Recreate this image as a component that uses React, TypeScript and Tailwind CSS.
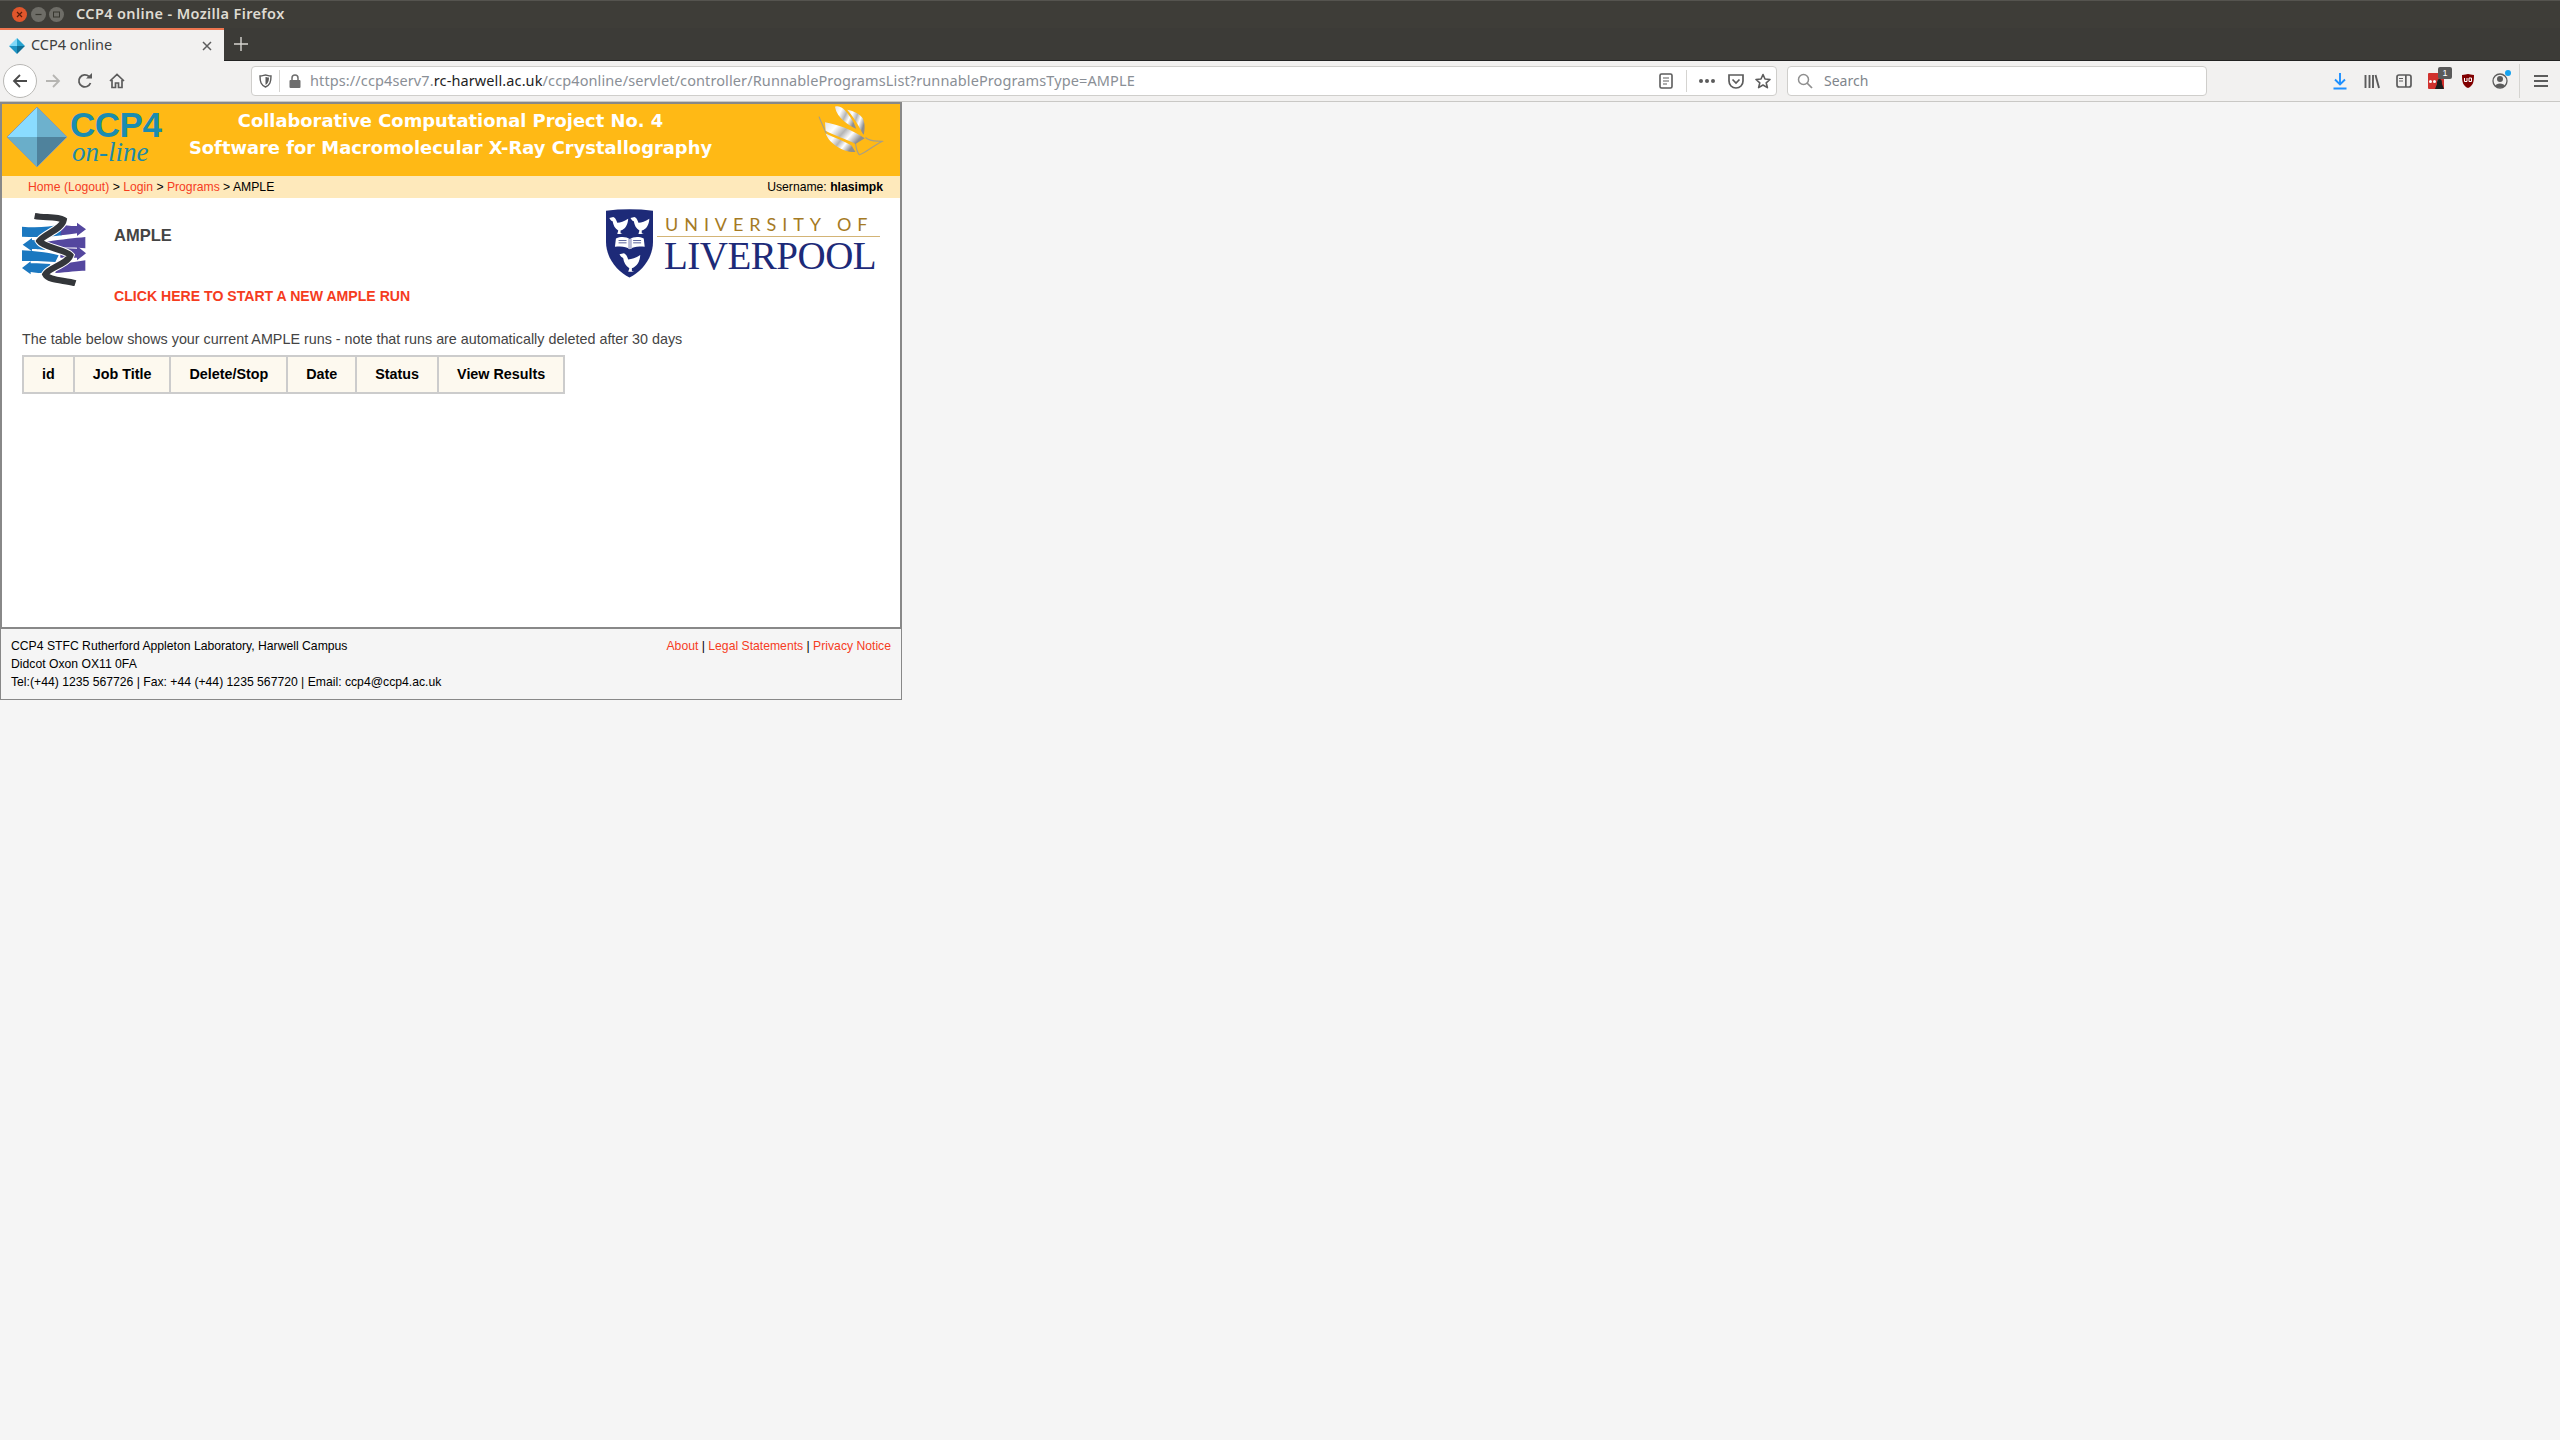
import React from "react";

function Diamond({ size }: { size: number }) {
  return (
    <svg width={size} height={size} viewBox="0 0 60 60" className="shrink-0">
      <polygon points="30,0 30,30 0,30" fill="#8adcff" />
      <polygon points="30,0 60,30 30,30" fill="#6db1cd" />
      <polygon points="0,30 30,30 30,60" fill="#6aaec9" />
      <polygon points="30,30 60,30 30,60" fill="#4f829c" />
      <polygon points="30,0 60,30 30,60 0,30" fill="none" stroke="#8f9ea3" strokeWidth="1" />
    </svg>
  );
}

function AmpleLogo() {
  const helix = "M58 30 C90 36 125 30 145 42 C140 70 85 85 72 105 C85 125 150 130 165 148 C155 175 100 185 90 205 C100 225 150 222 180 232";
  return (
    <svg width="65" height="75" viewBox="20 15 195 225" className="shrink-0">
      <g fill="#1b78c0">
        <path d="M20 62 C60 66 100 64 140 54 L140 88 C100 94 60 94 20 92 Z" />
        <path d="M22 116 L50 96 L50 102 C60 103 80 105 90 107 L90 132 C70 130 60 129 50 129 L50 136 Z" />
        <path d="M20 133 C50 135 90 137 130 148 L120 168 C80 165 50 165 20 165 Z" />
        <path d="M20 186 L46 166 L46 172 C60 171 85 174 105 174 L100 203 C75 202 60 200 46 198 L46 205 Z" />
      </g>
      <g fill="#54479f">
        <path d="M140 56 C165 60 175 60 185 60 L185 50 L212 70 L185 90 L185 82 C170 84 160 86 135 88 Z" />
        <path d="M95 107 C140 100 180 96 210 93 L210 127 C180 124 150 124 100 128 Z" />
        <path d="M135 126 L185 128 L185 120 L212 142 L185 163 L185 155 L135 155 Z" />
        <path d="M125 176 C160 170 185 168 210 163 L210 194 C185 194 160 198 120 201 Z" />
      </g>
      <path d={helix} fill="none" stroke="#ffffff" strokeWidth="25" />
      <path d={helix} fill="none" stroke="#33363a" strokeWidth="19" />
    </svg>
  );
}

const birdPath = "M28 38 L40 35 C48 38 50 48 52 52 C62 52 72 48 85 40 C84 58 76 72 62 76 L62 84 L68 86 L52 86 L55 76 C45 70 40 60 38 48 C35 46 32 46 28 38 Z";

function UniLogo() {
  return (
    <div className="flex items-start shrink-0">
      <svg width="47" height="69" viewBox="18 12 142 206" className="shrink-0">
        <path d="M18 16 C65 10 113 10 160 16 L160 110 C160 160 125 200 89 218 C53 200 18 160 18 110 Z" fill="#1d2a78" />
        <path d={birdPath} fill="#ffffff" />
        <path d={birdPath} fill="#ffffff" transform="translate(64 0)" />
        <path d="M48 100 C65 92 80 95 90 102 C100 95 115 92 132 100 L135 125 C115 122 100 125 90 132 C80 125 65 122 45 125 Z" fill="#ffffff" />
        <rect x="85" y="101" width="11" height="30" fill="#b5b8d5" />
        <path d="M56 106 H80 M56 113 H80 M100 106 H124 M100 113 H124" stroke="#3c4588" strokeWidth="2.5" />
        <path d={birdPath} fill="#ffffff" transform="translate(28 106) scale(1.1)" />
      </svg>
      <div className="flex flex-col ml-[4px] w-[223px]">
        <div className="h-[27px] pl-[8px] pt-[3px] font-['Lato',sans-serif] text-[18px] leading-[24px] tracking-[5.95px] text-[#a57a24] whitespace-nowrap">
          UNIVERSITY OF
        </div>
        <div className="h-[1px] bg-[#d3b476]" />
        <div className="pl-[7px] font-['Liberation_Serif',serif] text-[39px] leading-[38px] tracking-[-0.5px] text-[#1d2a78] whitespace-nowrap">
          LIVERPOOL
        </div>
      </div>
    </div>
  );
}

function Protein() {
  return (
    <svg width="67" height="53" viewBox="25 10 200 160" className="shrink-0">
      <defs>
        <linearGradient id="pg" x1="0" x2="1" y1="0" y2="0.5">
          <stop offset="0" stopColor="#e2e2e2" />
          <stop offset="0.3" stopColor="#ffffff" />
          <stop offset="0.55" stopColor="#b5b5b5" />
          <stop offset="0.75" stopColor="#ffffff" />
          <stop offset="1" stopColor="#8f8f8f" />
        </linearGradient>
      </defs>
      <path d="M30 45 C36 62 42 72 52 96 M140 125 C142 140 146 155 152 160 C170 155 190 135 220 120 C205 118 185 122 170 108" fill="none" stroke="#a89f86" strokeWidth="3.5" />
      <path d="M78 15 C95 10 108 25 118 38 C128 52 136 62 142 82 C122 72 84 50 78 15 Z" fill="url(#pg)" />
      <path d="M115 24 C135 28 155 38 162 50 C170 68 168 85 165 100 C155 88 148 62 115 24 Z" fill="url(#pg)" />
      <path d="M48 62 C85 68 130 85 168 110 L140 128 C110 112 70 100 50 88 Z" fill="url(#pg)" />
      <path d="M50 96 C75 108 105 118 128 132 L140 152 C110 155 62 130 50 96 Z" fill="url(#pg)" />
    </svg>
  );
}

const ic = "#5c5c5c";

function Favicon() {
  return (
    <svg width="16" height="16" viewBox="0 0 16 16">
      <polygon points="8,0 8,8 0,8" fill="#7fd8f8" />
      <polygon points="8,0 16,8 8,8" fill="#27a3d0" />
      <polygon points="0,8 8,8 8,16" fill="#1e94c4" />
      <polygon points="8,8 16,8 8,16" fill="#0f6f96" />
    </svg>
  );
}

function WinBtn({ bg, children }: { bg: string; children?: React.ReactNode }) {
  return (
    <div className={`w-[15px] h-[15px] rounded-full flex items-center justify-center ${bg}`}>{children}</div>
  );
}

function ToolBtn({ w = "w-[32px]", children }: { w?: string; children: React.ReactNode }) {
  return <div className={`${w} h-full flex items-center justify-center shrink-0`}>{children}</div>;
}

function Chrome() {
  return (
    <div className="font-['Noto_Sans','Open_Sans',sans-serif]">
      <div className="h-[28px] bg-[#3e3d38] border-t border-[#55544f] flex items-center">
        <div className="flex items-center gap-[3.5px] pl-[12px] w-[76px]">
          <WinBtn bg="bg-[#e0562c]">
            <svg width="7" height="7" viewBox="0 0 7 7"><path d="M1 1 L6 6 M6 1 L1 6" stroke="#5a1d0a" strokeWidth="1.2" /></svg>
          </WinBtn>
          <WinBtn bg="bg-[#6e6d67]">
            <svg width="7" height="7" viewBox="0 0 7 7"><path d="M0.5 3.5 H6.5" stroke="#37362f" strokeWidth="1.2" /></svg>
          </WinBtn>
          <WinBtn bg="bg-[#6e6d67]">
            <svg width="7" height="7" viewBox="0 0 7 7"><rect x="0.5" y="1" width="6" height="5" fill="none" stroke="#37362f" /></svg>
          </WinBtn>
        </div>
        <span className="pb-[1px] text-[14.5px] tracking-[0.37px] font-semibold text-[#dfdbd2] whitespace-nowrap">CCP4 online - Mozilla Firefox</span>
      </div>
      <div className="h-[33px] bg-[#3c3b37] border-b border-[#222] flex">
        <div className="w-[224px] h-[33px] bg-[#f2f1f0] border-t-2 border-[#ee7650] flex items-center pl-[9px] pr-[11px]">
          <Favicon />
          <span className="ml-[6px] pb-[1px] flex-1 text-[14.5px] text-[#3e3e3e] whitespace-nowrap">CCP4 online</span>
          <svg width="12" height="12" viewBox="0 0 12 12"><path d="M2 2 L10 10 M10 2 L2 10" stroke={ic} strokeWidth="1.5" /></svg>
        </div>
        <div className="w-[34px] flex items-center justify-center">
          <svg width="14" height="14" viewBox="0 0 14 14"><path d="M7 0 V14 M0 7 H14" stroke="#d6d5d0" strokeWidth="1.4" /></svg>
        </div>
      </div>
      <div className="h-[41px] bg-[#f2f1f0] border-b border-[#c9c8c5] flex items-center pl-[3px]">
        <ToolBtn w="w-[34px]">
          <div className="w-[34px] h-[34px] rounded-full bg-white border border-[#b9b8b5] flex items-center justify-center">
            <svg width="16" height="16" viewBox="0 0 16 16"><path d="M15 8 H2 M8 2 L2 8 L8 14" fill="none" stroke="#4a4a4a" strokeWidth="1.8" /></svg>
          </div>
        </ToolBtn>
        <ToolBtn>
          <svg width="16" height="16" viewBox="0 0 16 16"><path d="M1 8 H14 M8 2 L14 8 L8 14" fill="none" stroke="#b6b5b2" strokeWidth="1.8" /></svg>
        </ToolBtn>
        <ToolBtn>
          <svg width="16" height="16" viewBox="0 0 16 16"><path d="M13.5 10 A6 6 0 1 1 12 3.5" fill="none" stroke={ic} strokeWidth="1.8" /><path d="M9 5.5 H15 V0 Z" fill={ic} /></svg>
        </ToolBtn>
        <ToolBtn>
          <svg width="16" height="16" viewBox="0 0 16 16"><path d="M1 8 L8 1.5 L15 8 M3 7 V14.5 H6.5 V10 H9.5 V14.5 H13 V7" fill="none" stroke={ic} strokeWidth="1.7" /></svg>
        </ToolBtn>
        <div className="ml-[118px] w-[1526px] h-[30px] bg-white border border-[#cfcecb] rounded-[4px] flex items-center pr-[5px] shrink-0">
          <div className="w-[20px] flex justify-end shrink-0">
            <svg width="13" height="14" viewBox="0 0 13 14"><path d="M1 2 C4 2 5 1 6.5 1 C8 1 9 2 12 2 C12 8 11 11 6.5 13 C2 11 1 8 1 2 Z" fill="none" stroke={ic} strokeWidth="1.4" /><path d="M6.5 3 C7.5 3 8 3.5 10 3.6 C10 7 9 9.6 6.5 11 Z" fill={ic} /></svg>
          </div>
          <div className="ml-[7px] w-[1px] h-[22px] bg-[#d5d4d1] shrink-0" />
          <div className="ml-[9px] shrink-0">
            <svg width="12" height="14" viewBox="0 0 12 14"><path d="M3 6 V4 A3 3 0 0 1 9 4 V6" fill="none" stroke="#6e6e6e" strokeWidth="1.5" /><rect x="0.5" y="6" width="11" height="8" rx="1" fill="#6e6e6e" /></svg>
          </div>
          <div className="ml-[9px] flex-1 text-[14.5px] text-[#8a8f96] whitespace-nowrap tracking-[0.11px]">
            https://ccp4serv7.<span className="text-[#1e1e1e]">rc-harwell.ac.uk</span>/ccp4online/servlet/controller/RunnableProgramsList?runnableProgramsType=AMPLE
          </div>
          <div className="w-[16px] flex justify-center shrink-0">
            <svg width="14" height="16" viewBox="0 0 14 16"><rect x="1" y="1" width="12" height="14" rx="1.5" fill="none" stroke={ic} strokeWidth="1.6" /><path d="M4 5 H10 M4 8 H10 M4 11 H8" stroke={ic} strokeWidth="1.2" /></svg>
          </div>
          <div className="ml-[12px] w-[1px] h-[22px] bg-[#d5d4d1] shrink-0" />
          <div className="ml-[12px] flex gap-[2px] shrink-0">
            <span className="w-[4px] h-[4px] rounded-full bg-[#5c5c5c]" />
            <span className="w-[4px] h-[4px] rounded-full bg-[#5c5c5c]" />
            <span className="w-[4px] h-[4px] rounded-full bg-[#5c5c5c]" />
          </div>
          <div className="ml-[13px] shrink-0">
            <svg width="16" height="15" viewBox="0 0 16 15"><path d="M1 1 H15 V7 C15 11 12 14 8 14 C4 14 1 11 1 7 Z" fill="none" stroke={ic} strokeWidth="1.7" /><path d="M4.5 5.5 L8 9 L11.5 5.5" fill="none" stroke={ic} strokeWidth="1.7" /></svg>
          </div>
          <div className="ml-[11px] shrink-0">
            <svg width="16" height="16" viewBox="0 0 16 16"><path d="M8 1.5 L10 6 L15 6.5 L11.2 9.8 L12.4 14.6 L8 12 L3.6 14.6 L4.8 9.8 L1 6.5 L6 6 Z" fill="none" stroke={ic} strokeWidth="1.6" strokeLinejoin="round" /></svg>
          </div>
        </div>
        <div className="ml-[10px] w-[420px] h-[30px] bg-white border border-[#cfcecb] rounded-[4px] flex items-center pl-[9px] shrink-0">
          <svg width="16" height="16" viewBox="0 0 16 16"><circle cx="6.5" cy="6.5" r="5" fill="none" stroke="#8f8f8f" strokeWidth="1.5" /><path d="M10 10 L15 15" stroke="#8f8f8f" strokeWidth="1.7" /></svg>
          <span className="ml-[11px] pb-[1px] text-[14px] text-[#7f858c]">Search</span>
        </div>
        <div className="ml-[117px] flex items-center h-full">
          <ToolBtn>
            <svg width="14" height="18" viewBox="0 0 14 18"><path d="M7 1 V12 M2 7.5 L7 12.5 L12 7.5 M0.5 16.5 H13.5" fill="none" stroke="#1e90ff" strokeWidth="1.9" /></svg>
          </ToolBtn>
          <ToolBtn>
            <svg width="16" height="15" viewBox="0 0 16 15"><path d="M1.5 1 V14 M5.5 1 V14 M9 1 V14 M11.5 1 L15 14" fill="none" stroke={ic} strokeWidth="1.9" /></svg>
          </ToolBtn>
          <ToolBtn>
            <svg width="16" height="14" viewBox="0 0 16 14"><rect x="1" y="1" width="14" height="12" rx="2" fill="none" stroke={ic} strokeWidth="1.7" /><rect x="9" y="1" width="1.7" height="12" fill={ic} /><path d="M3 4.5 H7 M3 7 H7" stroke={ic} strokeWidth="1.2" /></svg>
          </ToolBtn>
          <ToolBtn>
            <div className="relative w-[16px] h-[16px] bg-[#d0312d] rounded-[1px] flex items-center gap-[1px] pl-[1px]">
              <span className="w-[3px] h-[3px] rounded-full bg-white" />
              <span className="w-[3px] h-[3px] rounded-full bg-white" />
              <span className="w-[3px] h-[3px] rounded-full bg-white" />
              <svg className="absolute left-[7px] top-[6px]" width="9" height="10" viewBox="0 0 9 10"><path d="M4.5 0 C7 0 7 3 7 5 L9 10 H0 L2 5 C2 3 2 0 4.5 0 Z" fill="#1d1d1d" /></svg>
              <div className="absolute left-[10px] -top-[6px] w-[14px] h-[12px] bg-[#5a5a5a] rounded-[2px] text-white text-[9px] leading-[12px] text-center font-['Liberation_Sans',sans-serif]">1</div>
            </div>
          </ToolBtn>
          <ToolBtn>
            <div className="w-[14px]">
              <svg width="14" height="16" viewBox="0 0 14 16"><path d="M1 2 C4 2 5 1 7 1 C9 1 10 2 13 2 C13 9 12 13 7 15 C2 13 1 9 1 2 Z" fill="#800000" /><path d="M3.5 5 V8.5 H6 V5 M8 5 V8.5 H10.5 V5 H8" fill="none" stroke="#ffffff" strokeWidth="1" /></svg>
            </div>
          </ToolBtn>
          <ToolBtn>
            <div className="relative w-[16px] h-[16px]">
              <svg width="16" height="16" viewBox="0 0 16 16"><circle cx="8" cy="8" r="7" fill="none" stroke={ic} strokeWidth="1.3" /><circle cx="8" cy="6" r="3" fill={ic} /><path d="M3 13 C4 9.5 12 9.5 13 13 C11 15 5 15 3 13 Z" fill={ic} /></svg>
              <span className="absolute -top-[3px] -right-[3px] w-[6px] h-[6px] rounded-full bg-[#16a3f0]" />
            </div>
          </ToolBtn>
          <div className="ml-[3px] w-[1px] h-[34px] bg-[#d5d4d1]" />
          <div className="ml-[14px] flex flex-col gap-[3px]">
            <span className="w-[14px] h-[2px] bg-[#5c5c5c]" />
            <span className="w-[14px] h-[2px] bg-[#5c5c5c]" />
            <span className="w-[14px] h-[2px] bg-[#5c5c5c]" />
          </div>
        </div>
      </div>
    </div>
  );
}

function Page() {
  const cols = ["id", "Job Title", "Delete/Stop", "Date", "Status", "View Results"];
  const a = "text-[#f53c1e]";
  return (
    <div className="w-[902px] font-['Liberation_Sans',sans-serif] border-t-2 border-[#888888]">
      <div className="border-x-2 border-[#888888]">
        <div className="h-[72px] bg-[#ffb915] flex items-start">
          <div className="pl-[5px] pt-[3px] flex w-[200px]">
            <Diamond size={60} />
            <div className="ml-[3px] flex flex-col pt-[2px]">
              <span className="font-bold text-[35px] leading-[32px] tracking-[-0.5px] text-[#1a8cb0]">CCP4</span>
              <span className="font-['Liberation_Serif',serif] italic text-[27px] leading-[23px] pl-[2px] text-[#1d8aa8]">on-line</span>
            </div>
          </div>
          <div className="flex-1 -ml-[118px] pt-[3px] text-center font-['DejaVu_Sans',sans-serif] font-bold text-white text-[17.9px] leading-[27px] whitespace-nowrap">
            <div>Collaborative Computational Project No. 4</div>
            <div>Software for Macromolecular X-Ray Crystallography</div>
          </div>
          <div className="pt-[1px] pr-[16px]">
            <Protein />
          </div>
        </div>
        <div className="h-[22px] bg-[#fee9bb] flex items-center justify-between pl-[26px] pr-[17px] text-[12.2px] text-black">
          <div>
            <span className={a}>Home (Logout)</span> &gt; <span className={a}>Login</span> &gt; <span className={a}>Programs</span> &gt; AMPLE
          </div>
          <div>
            Username: <b>hlasimpk</b>
          </div>
        </div>
        <div className="h-[429px] bg-white pl-[20px] pr-[20px]">
          <div className="flex pt-[13px] h-[146px]">
            <AmpleLogo />
            <div className="ml-[27px] flex-1">
              <div className="mt-[14px] text-[16.5px] leading-[20px] font-bold text-[#444444]">AMPLE</div>
              <div className={`mt-[42px] text-[14.1px] leading-[18px] font-bold ${a}`}>CLICK HERE TO START A NEW AMPLE RUN</div>
            </div>
            <div className="-mt-[2px]">
              <UniLogo />
            </div>
          </div>
          <div className="mt-[-14px] text-[14.33px] leading-[18px] text-[#444444]">
            The table below shows your current AMPLE runs - note that runs are automatically deleted after 30 days
          </div>
          <table className="mt-[7px] border-collapse text-[14.33px] font-bold text-black">
            <thead>
              <tr className="bg-[#fdf9ef]">
                {cols.map((c) => (
                  <th key={c} className="border-2 border-[#cccccc] h-[37px] px-[18px] font-bold">
                    {c}
                  </th>
                ))}
              </tr>
            </thead>
          </table>
        </div>
      </div>
      <div className="h-[73px] border-t-2 border-x border-b border-[#888888] bg-[#f5f5f5] flex justify-between pl-[10px] pr-[10px] pt-[8px] text-[12.2px] leading-[18px] text-black">
        <div>
          <div>CCP4 STFC Rutherford Appleton Laboratory, Harwell Campus</div>
          <div>Didcot Oxon OX11 0FA</div>
          <div>Tel:(+44) 1235 567726 | Fax: +44 (+44) 1235 567720 | Email: ccp4@ccp4.ac.uk</div>
        </div>
        <div>
          <span className={a}>About</span> | <span className={a}>Legal Statements</span> | <span className={a}>Privacy Notice</span>
        </div>
      </div>
    </div>
  );
}

export default function App() {
  return (
    <div className="w-[2560px] h-[1440px] overflow-hidden bg-[#f5f5f5] flex flex-col">
      <Chrome />
      <Page />
    </div>
  );
}
